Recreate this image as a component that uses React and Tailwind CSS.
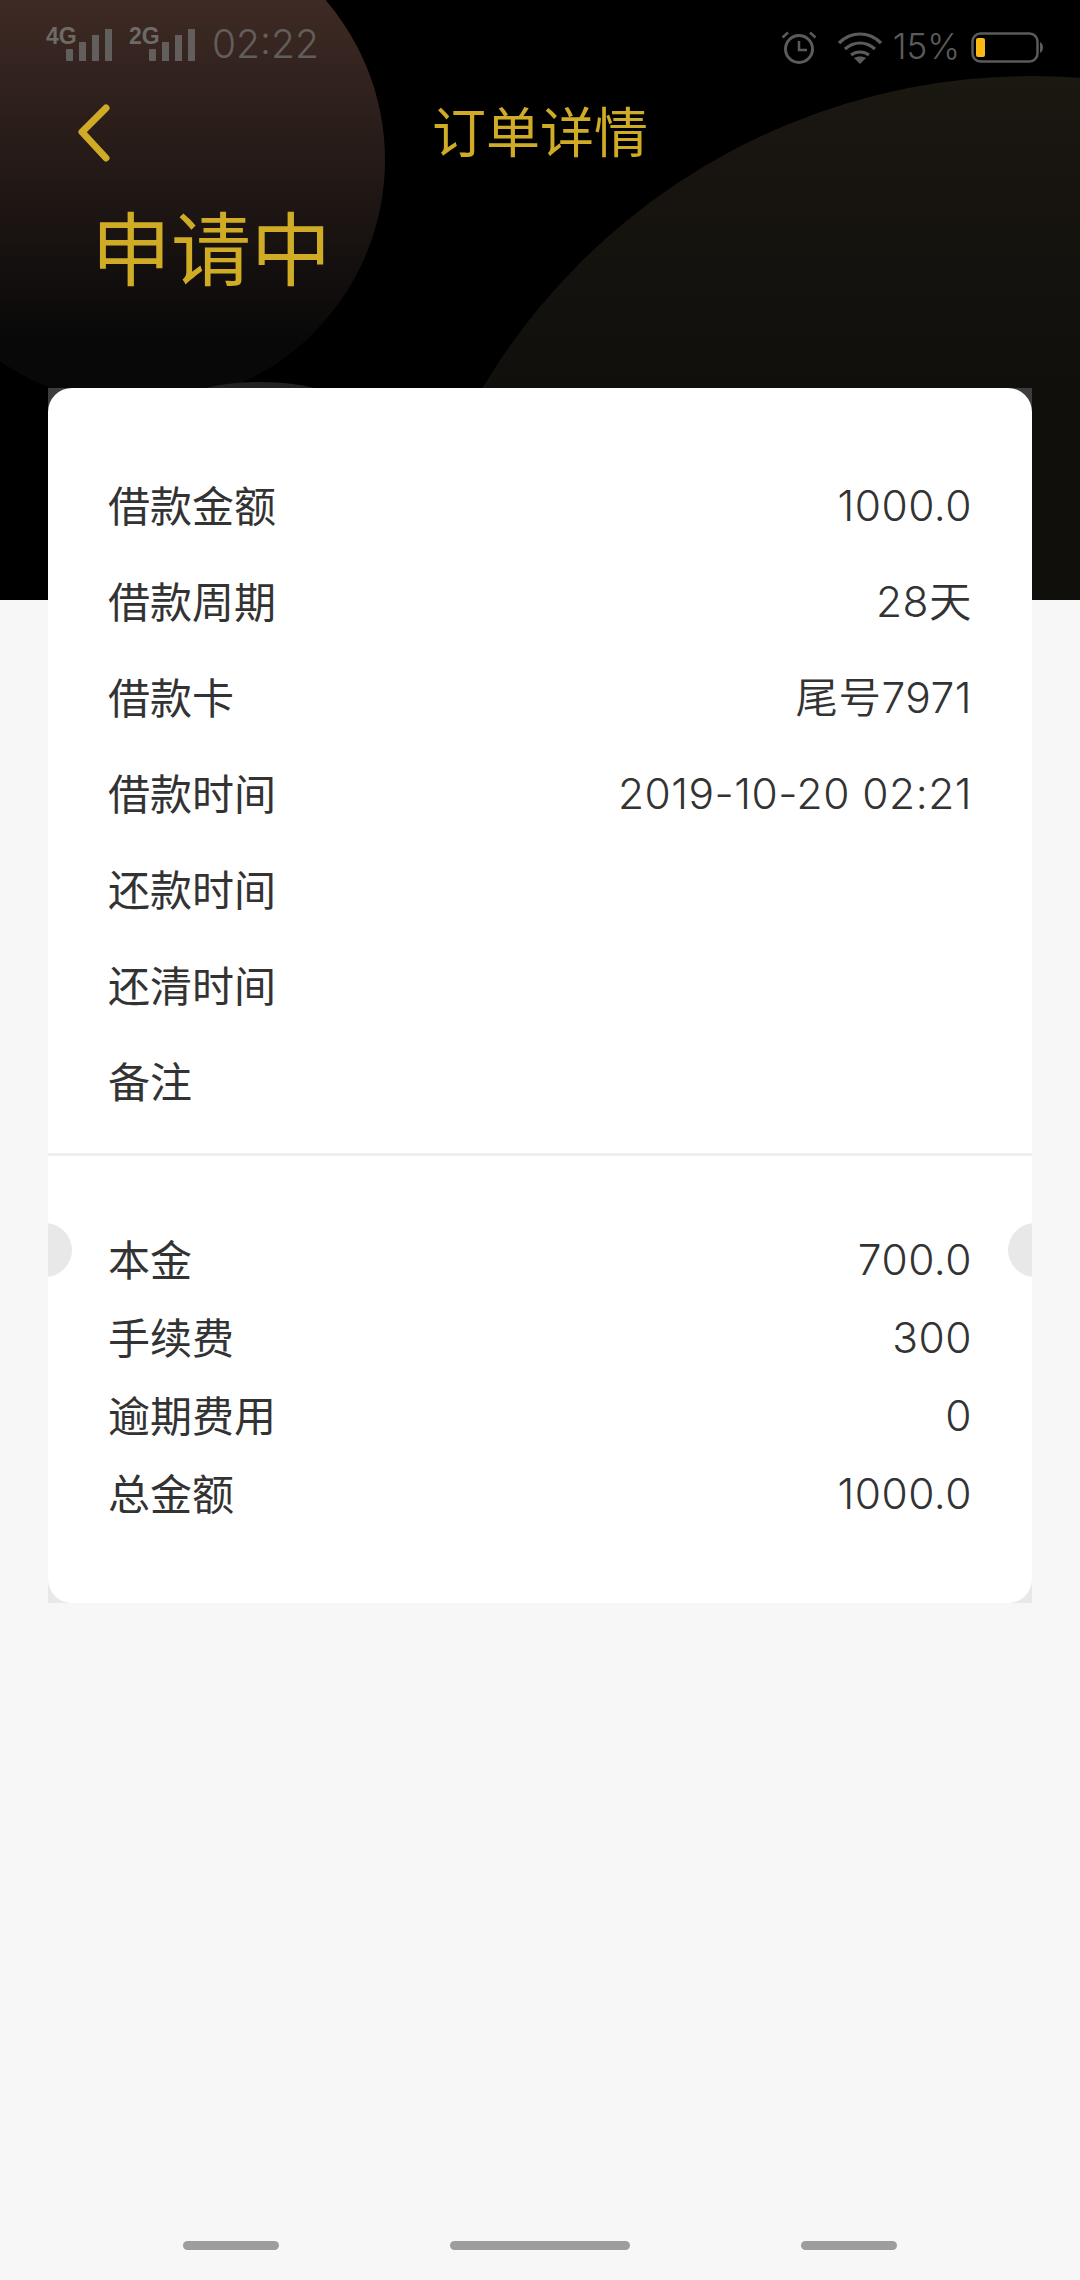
import React from 'react';

const cjk = "font-['Inter','Noto_Sans_CJK_SC',sans-serif]";

const details = [
  ['借款金额', '1000.0'],
  ['借款周期', '28天'],
  ['借款卡', '尾号7971'],
  ['借款时间', '2019-10-20 02:21'],
  ['还款时间', ''],
  ['还清时间', ''],
  ['备注', ''],
];

const fees = [
  ['本金', '700.0'],
  ['手续费', '300'],
  ['逾期费用', '0'],
  ['总金额', '1000.0'],
];

const Signal = ({ label }) => (
  <svg width="66" height="36" viewBox="0 0 66 36" className="block overflow-visible">
    <text x="-1" y="16" fontSize="23" fontWeight="700" fontFamily="Liberation Sans" fill="#6e6a68">
      {label}
    </text>
    <rect x="19" y="21" width="7" height="12" rx="1" fill="#625e5c" />
    <rect x="32" y="14" width="7" height="19" fill="#625e5c" />
    <rect x="45" y="7" width="7" height="26" fill="#625e5c" />
    <rect x="58" y="1" width="7" height="32" fill="#625e5c" />
  </svg>
);

const StatusBar = () => (
  <div className="relative flex h-[64px] items-end justify-between pl-[47px] pr-[37px] text-[#5b5b5b]">
    <div className="flex items-end">
      <Signal label="4G" />
      <div className="ml-[17px]">
        <Signal label="2G" />
      </div>
      <span className="ml-[16px] text-[39px] font-[350] leading-[40px] text-[#625e5c]">02:22</span>
    </div>
    <div className="flex items-end">
      <svg width="36" height="34" viewBox="0 0 36 34" fill="none" stroke="#5b5b5b" strokeWidth="3">
        <circle cx="18" cy="19" r="13.5" />
        <path d="M18 11v9h8" strokeWidth="2.5" />
        <path d="M1.5 7.5 7 2.5M34.5 7.5 29 2.5" strokeWidth="2.5" />
      </svg>
      <svg width="46" height="32" viewBox="0 0 46 32" fill="none" stroke="#5b5b5b" strokeWidth="3.2" className="ml-[20px]">
        <path d="M2 11C14 -1 32 -1 44 11" />
        <path d="M8 17c9-8 21-8 30 0" />
        <path d="M14 23c5-4 13-4 18 0" />
        <path d="M23 32l-6-6c3-2 9-2 12 0z" fill="#5b5b5b" stroke="none" />
      </svg>
      <span className="ml-[10px] text-[35px] font-[350] leading-[36px]">15%</span>
      <svg width="72" height="32" viewBox="0 0 72 32" fill="none" className="ml-[11px]">
        <rect x="1.5" y="1.5" width="65" height="28" rx="8" stroke="#5b5b5b" strokeWidth="2.5" />
        <rect x="5" y="6" width="9" height="19" rx="2" fill="#fdb913" />
        <path d="M69 10c2 1 3 3 3 5.500s-1 4.500-3 5.500z" fill="#5b5b5b" />
      </svg>
    </div>
  </div>
);

const Row = ({ label, value, height }) => (
  <div className={`flex items-center justify-between ${height}`}>
    <span>{label}</span>
    <span className="text-[42.5px] font-[350] tracking-[0.5px]">{value}</span>
  </div>
);

export default function App() {
  return (
    <div className={`flex min-h-[2280px] flex-col bg-[#f7f7f7] ${cjk}`}>
      <div className="relative h-[600px] overflow-hidden bg-black">
        <div className="absolute left-[-105px] top-[-85px] h-[490px] w-[490px] rounded-full bg-[linear-gradient(#4a312a_0px,#3e2a24_85px,#080808_430px)]" />
        <div className="absolute left-[392px] top-[76px] h-[1280px] w-[1280px] rounded-full bg-[linear-gradient(#1b1711_0px,#100f0c_320px)]" />
        <div className="absolute left-[170px] top-[382px] h-[60px] w-[180px] rounded-[50%] bg-[#222222]" />
        <StatusBar />
        <div className="relative mt-[30px] flex h-[78px] items-center justify-center text-[54px] text-[#cfab26]">
          <svg width="36" height="58" viewBox="0 0 36 58" fill="none" stroke="#cfab26" strokeWidth="7" strokeLinecap="round" strokeLinejoin="round" className="absolute left-[76px] top-[10px]">
            <path d="M30 4 6 28l24 26" />
          </svg>
          订单详情
        </div>
        <div className="relative mt-[28px] pl-[91px] text-[80px] leading-[100px] text-[#cfab26]">申请中</div>
      </div>

      <div className="relative z-10 mx-[48px] mt-[-212px] bg-[linear-gradient(#3d3d3d_0_50%,#e8e8e8_50%_100%)]">
        <div className="relative overflow-hidden rounded-[24px] bg-white text-[42px] text-[#333333]">
          <div className="absolute left-[-30px] top-[835px] h-[54px] w-[54px] rounded-full bg-[#e8e8e8]" />
          <div className="absolute right-[-30px] top-[835px] h-[54px] w-[54px] rounded-full bg-[#e8e8e8]" />
          <div className="relative border-b-[3px] border-[#efefef] pb-[23px] pl-[60px] pr-[60px] pt-[70px]">
            {details.map(([label, value]) => (
              <Row key={label} label={label} value={value} height="h-[96px]" />
            ))}
          </div>
          <div className="relative pb-[70px] pl-[60px] pr-[60px] pt-[65px]">
            {fees.map(([label, value]) => (
              <Row key={label} label={label} value={value} height="h-[78px]" />
            ))}
          </div>
        </div>
      </div>

      <div className="mt-auto flex justify-between pb-[30px] pl-[183px] pr-[183px]">
        <div className="h-[9px] w-[96px] rounded-full bg-[#9d9d9d]" />
        <div className="h-[9px] w-[180px] rounded-full bg-[#9d9d9d]" />
        <div className="h-[9px] w-[96px] rounded-full bg-[#9d9d9d]" />
      </div>
    </div>
  );
}
